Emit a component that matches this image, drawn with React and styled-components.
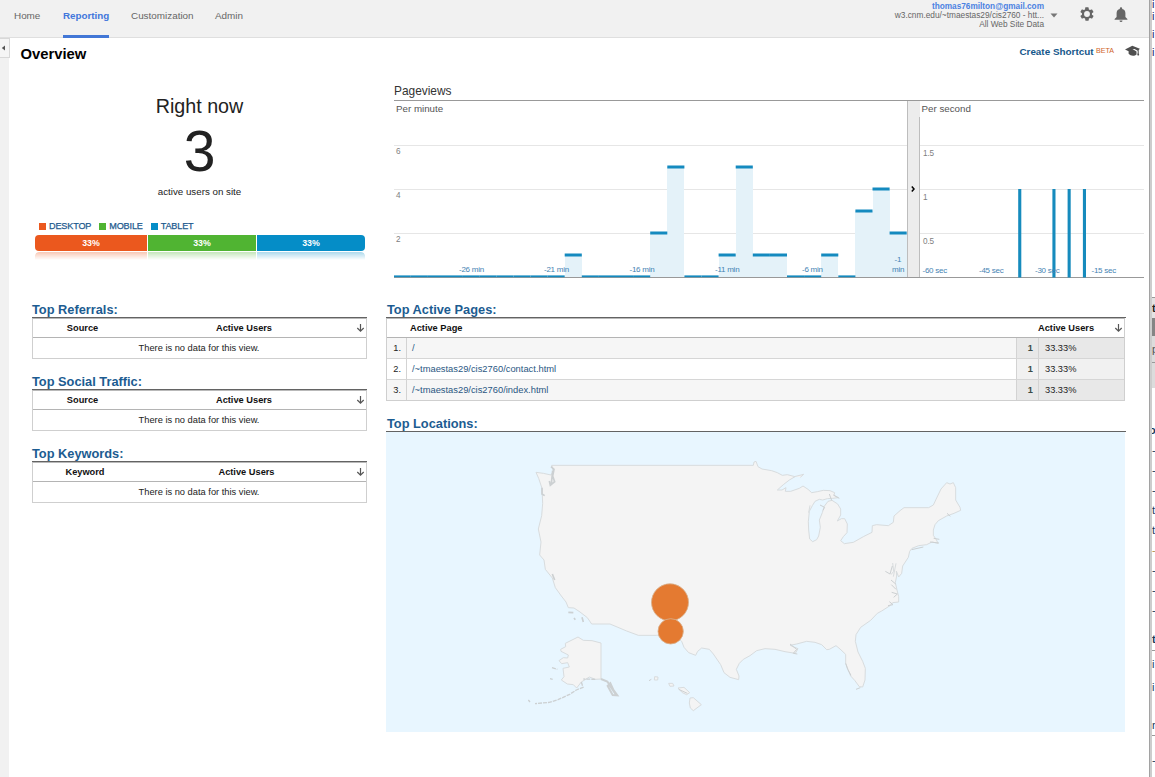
import React from 'react';
import styled, { createGlobalStyle } from 'styled-components';

const Global = createGlobalStyle`
  *, *::before, *::after { box-sizing: border-box; }
  body { margin: 0; background: #fff; font-family: "Liberation Sans", Arial, sans-serif; color: #222; overflow: hidden; }
`;

const Screen = styled.div`display: flex; width: 1155px; height: 777px; overflow: hidden;`;
const Window = styled.div`display: flex; flex-direction: column; width: 1149px; flex: none;`;
const WindowEdge = styled.div`width: 3px; flex: none; background: #cdcdcd; border-left: 1px solid #a2a2a2;`;

const Header = styled.header`
  display: flex; height: 38px; flex: none; padding-left: 14px;
  background: #f1f1f1; border-bottom: 1px solid #dfdfdf;
`;
const Nav = styled.nav`display: flex; gap: 22px; flex: 1;`;
const NavItem = styled.a`
  height: 38px; line-height: 32px; width: ${p => p.$w}px; font-size: ${p => (p.$active ? 9.8 : 9.9)}px; white-space: nowrap;
  color: ${p => (p.$active ? '#4277dc' : '#666')};
  font-weight: ${p => (p.$active ? 700 : 400)};
  border-bottom: ${p => (p.$active ? '3px solid #4277d6' : '0')};
`;
const Account = styled.div`
  padding-top: 2px; text-align: right; font-size: 8.3px; line-height: 9px; color: #666; white-space: nowrap;
`;
const Email = styled.div`font-weight: 700; color: #4b82e2; font-size: 8.25px;`;
const HeaderIcon = styled.svg`display: block; flex: none; margin: ${p => p.$m};`;

const Body = styled.div`display: flex; flex: 1; min-height: 0;`;
const Rail = styled.aside`width: 9px; flex: none; background: #f1f1f1;`;
const RailToggle = styled.div`
  display: flex; align-items: center; justify-content: center; width: 10px; height: 20px; padding-right: 3px;
  background: #f5f5f5; border: 1px solid #d8d8d8; border-left: 0;
`;
const Content = styled.main`flex: 1; min-width: 0;`;
const TitleBar = styled.div`display: flex; align-items: center; height: 32px; padding: 0 9px 0 11.5px;`;
const Title = styled.h1`margin: 0; flex: 1; font-size: 14.8px; line-height: 18px; color: #000;`;
const Shortcut = styled.a`font-size: 9.9px; font-weight: 700; color: #15578a; margin-top: -5px;`;
const Beta = styled.span`margin: -7px 11px 0 2.5px; font-size: 7.1px; color: #d0652a;`;

const Columns = styled.div`display: flex; align-items: flex-start; padding-left: 23px;`;
const LeftCol = styled.section`width: 335px; flex: none;`;
const RightCol = styled.section`margin-left: 19px; width: 758px; padding-top: 12px;`;

const Summary = styled.div`height: 230px; padding: 25px 2px 0 3px; text-align: center; color: #222;`;
const SummaryTitle = styled.div`font-size: 19.7px; line-height: 22px; padding-right: 1px;`;
const SummaryCount = styled.div`font-size: 57px; line-height: 62px; padding: 3px 1px 0 0; margin-bottom: 4px;`;
const SummaryNote = styled.div`font-size: 9.75px; line-height: 12px; padding-right: 1px;`;
const Legend = styled.div`display: flex; gap: 8px; margin: 22px 0 3px 4px; line-height: 12px;`;
const LegendItem = styled.span`
  display: flex; align-items: center; gap: 3px; font-size: 9.1px; letter-spacing: -0.15px; color: #1d5a8e;
  -webkit-text-stroke: .25px #1d5a8e;
  &::before { content: ''; width: 7px; height: 7px; margin-top: 1px; background: ${p => p.$c}; }
`;
const Split = styled.div`
  display: grid; grid-template-columns: 112px 108px 108px; gap: 1px; height: 16px; border-radius: 4px; overflow: hidden;
`;
const SplitPart = styled.div`
  background: ${p => p.$c}; color: #fff; font-size: 8.8px; font-weight: 700; line-height: 16px;
`;
const Reflection = styled(Split)`
  height: 8px; margin-top: 1px; opacity: .33; border-radius: 4px 4px 0 0;
  mask-image: linear-gradient(#000, transparent);
`;

const Block = styled.div`width: ${p => p.$w || 335}px; height: ${p => (p.$h ? p.$h + 'px' : 'auto')};`;
const BlockTitle = styled.h2`
  margin: 0; height: 17px; padding-left: ${p => p.$pl || 0}px; font-size: 12.8px; line-height: 19px; color: #1c5c91;
`;
const Rule = styled.div`height: 1px; background: #636363;`;
const Table = styled.div`width: ${p => p.$w || 335}px; border: 1px solid #cfcfcf; border-top-color: #b9b9b9; font-size: 9.25px;`;
const TableHead = styled.div`
  display: flex; align-items: center; height: 19px; padding-right: 1px; border-bottom: 1px solid #b4b4b4; font-weight: 700; color: #111;
`;
const HeadCell = styled.div`
  width: ${p => p.$w}px; flex: ${p => (p.$grow ? 1 : 'none')}; text-align: ${p => p.$align || 'center'}; padding-left: ${p => p.$pl || 0}px;
`;
const EmptyRow = styled.div`height: 20px; line-height: 20px; padding-right: 1px; text-align: center; color: #222; font-size: 9.3px;`;
const Row = styled.div`
  display: grid; grid-template-columns: 20px 610px 22px 1fr; height: 21px; line-height: 20px;
  background: ${p => (p.$odd ? '#f6f6f6' : '#fff')};
  &:last-child { height: 20px; }
`;
const Cell = styled.div`
  padding: ${p => p.$pad || '0 5px'}; text-align: ${p => p.$align || 'left'};
  font-weight: ${p => (p.$bold ? 700 : 400)}; color: ${p => p.$color || '#222'};
  background: ${p => p.$bg || 'transparent'};
  border-right: ${p => (p.$last ? 0 : '1px solid #d3d3d3')};
  border-bottom: 1px solid #d6d6d6;
  ${Row}:last-child & { border-bottom: 0; }
`;
const PageLink = styled.a`color: #2a5783; font-size: 9.35px;`;

const ChartPanel = styled.div`margin-left: 8px; width: 750px; height: 218px;`;
const ChartTitle = styled.div`height: 18px; font-size: 11.9px; line-height: 18px; color: #333;`;
const ChartSvg = styled.svg`display: block; font-family: "Liberation Sans", Arial, sans-serif;`;
const MapSvg = styled.svg`display: block; background: #e8f6ff;`;

const Behind = styled.aside`width: 3px; flex: none; overflow: hidden; background: #fff;`;
const Fragment = styled.div`
  height: ${p => p.$h}px; line-height: ${p => p.$h}px; overflow: hidden; white-space: nowrap; text-indent: ${p => p.$x || 0}px;
  font-size: 11px; font-weight: ${p => (p.$bold ? 700 : 400)};
  color: ${p => p.$color || '#173b5c'}; background: ${p => p.$bg || 'transparent'};
  border-bottom: ${p => (p.$line ? '1px solid #999' : '0')};
`;

const VALUES = [0,0,0,0,0,0,0,0,0,0,1,0,0,0,0,2,5,0,0,1,5,1,1,0,0,1,0,3,4,2];
const STEP = 17.1;
const START = 393.7;

function Pageviews() {
  return (
    <ChartSvg width="750" height="178" viewBox="394 100 750 178">
      <g shapeRendering="crispEdges">
        {[145, 189, 233].map(y => (
          <g key={y} fill="#e6e6e6"><rect x="394" y={y} width="513" height="1" /><rect x="920" y={y} width="224" height="1" /></g>
        ))}
        <rect x="907" y="100" width="13" height="178" fill="#ececec" />
        <rect x="907" y="100" width="1" height="178" fill="#bdbdbd" />
        <rect x="919" y="117" width="1" height="160" fill="#bdbdbd" />
        <rect x="394" y="100" width="750" height="1" fill="#999" />
      </g>
      {VALUES.map((v, i) => v > 0 && (
        <rect key={i} x={START + i * STEP} y={277 - v * 22} width={STEP} height={v * 22} fill="#e4f2f9" shapeRendering="crispEdges" />
      ))}
      <rect x="394" y="277" width="750" height="1" fill="#999" />
      {VALUES.map((v, i) => (
        <rect key={i} x={START + i * STEP} y={v ? 276 - v * 22 - 0.5 : 275.4} width={STEP} height={v ? 3 : 1.8} fill="#148abf" />
      ))}
      <g fill="#168bbd">
        {[1018.2, 1052.4, 1067.6, 1082.9].map(x => <rect key={x} x={x} y="189" width="3.1" height="88.5" />)}
      </g>
      <g fontSize="9.75" fill="#555"><text x="396" y="112">Per minute</text><text x="921.5" y="112">Per second</text></g>
      <g fontSize="8.2" fill="#808080" letterSpacing="-0.15">
        <text x="396" y="154">6</text><text x="396" y="198">4</text><text x="396" y="242">2</text>
        <text x="923" y="156">1.5</text><text x="923" y="200">1</text><text x="923" y="244">0.5</text>
      </g>
      <g fontSize="8" fill="#4583b3" letterSpacing="-0.25">
        <text x="459" y="272">-26 min</text><text x="544" y="272">-21 min</text><text x="629.5" y="272">-16 min</text>
        <text x="715" y="272">-11 min</text><text x="802" y="272">-6 min</text>
        <text x="894.5" y="262">-1</text><text x="892" y="272">min</text>
        <text x="922.5" y="273">-60 sec</text><text x="979" y="273">-45 sec</text><text x="1035" y="273">-30 sec</text><text x="1091.5" y="273">-15 sec</text>
      </g>
      <path d="M911.8 186.5l2.2 2.5l-2.2 2.5" fill="none" stroke="#000" strokeWidth="1.5" />
    </ChartSvg>
  );
}

function LocationsMap() {
  return (
    <MapSvg width="739" height="300" viewBox="-342 -24 2217 900">
      <g fill="#f4f4f4" stroke="#d8dcde" strokeWidth="3" strokeLinejoin="round">
        <path d="M155 76H760L762 66L768 64L774 80L786 87L815 92L832 98L847 106L862 104L885 110L868 120L850 134L832 150L846 150L858 143L856 154L872 154L898 145L909 138L924 148L935 158L952 155L970 151L990 152L1004 158L1002 166L1015 173L998 175L982 176L968 180L958 178L945 184L937 197L928 214L925 245L926 270L929 297L938 305L950 299L956 288L961 262L958 240L967 218L972 200L984 184L996 181L1013 192L1022 207L1022 225L1012 243L1024 236L1034 236L1042 252L1041 278L1030 290L1022 302L1033 311L1060 307L1090 290L1116 277L1117 257L1130 254L1165 257L1180 247L1182 228L1200 212L1212 203H1286L1300 195L1310 174L1323 147L1340 128L1350 132L1360 128L1367 143V180L1380 202L1382 211L1362 220L1340 228L1315 242L1305 254L1300 270V286L1309 299L1314 310L1296 306L1280 314L1256 317L1236 325L1229 334L1225 352L1208 378L1205 400L1196 411L1189 393L1190 408L1186 428L1191 450L1196 470V486L1178 488L1170 497L1145 513L1132 520L1112 541L1082 562L1068 584L1066 604L1074 636L1088 664L1096 685L1095 720L1088 741L1078 740L1064 721L1052 708L1044 688L1037 670V643L1020 627L1008 617L988 628L980 629L965 614L945 607L920 604L890 612L870 616L894 626L886 640L855 635L825 628L795 626L770 632L750 647L730 658L718 670L709 688L717 708L716 719L690 712L672 698L662 674L640 642L628 628L605 624L593 634L587 646L566 638L552 622L545 604L530 590L512 579L470 586H415L380 573L330 552H275L262 533L240 516L222 504L205 503L198 486L184 468L166 443L157 414L136 388L132 360L119 345L123 306L115 267L125 227L128 190L126 145L116 115L108 97L130 100L153 105L160 94Z" />
        <path d="M303 609V717L286 718L268 711L244 726L230 744L220 734L202 732L184 720L192 710L189 685L208 681L203 668L185 671L177 662L190 653L203 654L205 645L183 634L182 628L197 620L196 610L222 597L234 591L250 601L276 602Z" />
        <path d="M570 774L580 773L604 794L588 806L580 812L571 804L568 789ZM534 744L552 742L569 758L560 764L547 758ZM506 730L518 730L522 738L510 739ZM464 710L474 711L473 720L463 720Z" />
        <path d="M883 110L911 103L901 112M926 218L930 196M1178 369L1181 394L1173 404M1188 370L1180 410" />
      </g>
      <g fill="none" stroke="#ccd0d2" strokeWidth="5">
        <path d="M153 80L162 88L158 108L164 125L151 136L148 123M158 92L154 132M126 143V162L134 167M157 402L164 420M205 517L220 518M222 534L226 539M246 532L250 546" />
        <path d="M303 717L322 725L352 766L338 765L323 738L331 730L344 758M326 732L348 764" strokeWidth="6" />
        <path d="M244 726L249 742L229 750L209 763L174 779L148 787L105 791M90 786L85 780M286 718L250 717M156 683L172 688M150 716L158 718" strokeWidth="4" strokeDasharray="12 3" />
        <path d="M447 722L454 718M536 748L562 760M1156 394L1170 402L1177 378M1173 420L1187 432M1174 434L1188 448M1175 457L1192 462L1181 472M1168 485L1179 494L1164 497M1290 306L1317 309M1301 295L1318 298M1341 220L1351 229M1235 329L1270 321M1037 670L1043 688L1053 706M870 612L890 628L880 640L892 642M1068 748L1081 743M960 195L974 202L969 211M988 162L995 181M1000 165L1018 175" strokeWidth="3" />
      </g>
      <g fill="#e47a31" stroke="#d9b08c" strokeWidth="2.5">
        <circle cx="510" cy="487" r="55.5" /><circle cx="512" cy="574" r="38" />
      </g>
    </MapSvg>
  );
}

const ArrowIcon = styled.svg`display: block; flex: none;`;
const SortArrow = () => (
  <ArrowIcon width="9" height="10" viewBox="0 0 9 10">
    <path d="M4.5 1v7M1.3 5L4.5 8.2L7.7 5" fill="none" stroke="#555" strokeWidth="1.2" />
  </ArrowIcon>
);

function EmptyTable({ title, label, labelWidth, usersWidth }) {
  return (
    <Block $h={72}>
      <BlockTitle>{title}</BlockTitle>
      <Rule />
      <Table>
        <TableHead>
          <HeadCell $w={labelWidth}>{label}</HeadCell>
          <HeadCell $w={usersWidth}>Active Users</HeadCell>
          <HeadCell $grow />
          <SortArrow />
        </TableHead>
        <EmptyRow>There is no data for this view.</EmptyRow>
      </Table>
    </Block>
  );
}

const PAGES = ['/', '/~tmaestas29/cis2760/contact.html', '/~tmaestas29/cis2760/index.html'];
const DEVICES = [['DESKTOP', '#eb581e'], ['MOBILE', '#50b432'], ['TABLET', '#058dc7']];
const FRAGMENTS = [
  { h: 8, t: 'i', color: '#22226a' }, { h: 17, t: 'i', color: '#22226a' }, { h: 18, t: 'i', color: '#22226a' },
  { h: 18, t: 'i', color: '#22226a' }, { h: 237, line: 1 },
  { h: 20, t: 't', bold: 1, bg: '#e3e3e3', color: '#222' }, { h: 18, bg: '#858585' },
  { h: 27, t: 'p', bg: '#dcdcdc', color: '#555', line: 1 }, { h: 25, bg: '#dcdcdc' }, { h: 32 },
  { h: 20, t: 'o', bold: 1, x: -3 }, { h: 20, t: '-' }, { h: 20, t: '-' }, { h: 20, t: '-' }, { h: 20, t: 't' }, { h: 20, t: 't' },
  { h: 20, t: '-', color: '#b09050' }, { h: 20, t: '-' }, { h: 20, t: '-' }, { h: 20, t: '-' }, { h: 8 },
  { h: 23, t: 't', bold: 1, line: 1 }, { h: 26, t: 'i' }, { h: 20, t: 'i' }, { h: 18 }, { h: 21, t: 'r', line: 1 }, { h: 14 }, { h: 20, t: '-' },
];

export default function App() {
  return (
    <Screen>
      <Global />
      <Window>
        <Header>
          <Nav>
            <NavItem $w={27}>Home</NavItem>
            <NavItem $w={46} $active>Reporting</NavItem>
            <NavItem $w={62}>Customization</NavItem>
            <NavItem $w={30}>Admin</NavItem>
          </Nav>
          <Account>
            <Email>thomas76milton@gmail.com</Email>
            <div>w3.cnm.edu/~tmaestas29/cis2760 - htt...</div>
            <div>All Web Site Data</div>
          </Account>
          <HeaderIcon $m="13px 21px 0 6px" width="8" height="5" viewBox="0 0 8 5"><path d="M.5.5h7L4 4.5z" fill="#777" /></HeaderIcon>
          <HeaderIcon $m="6px 19px 0 0" width="16" height="16" viewBox="0 0 24 24">
            <path fillRule="evenodd" fill="#666" d="M19.4 13a7.8 7.8 0 0 0 0-2l2.1-1.6a.5.5 0 0 0 .1-.7l-2-3.4a.5.5 0 0 0-.6-.2l-2.5 1a7.3 7.3 0 0 0-1.7-1l-.4-2.6a.5.5 0 0 0-.5-.5h-4a.5.5 0 0 0-.5.4l-.4 2.7a7.6 7.6 0 0 0-1.7 1l-2.5-1a.5.5 0 0 0-.6.2l-2 3.4a.5.5 0 0 0 .2.7L4.5 11a7.9 7.9 0 0 0 0 2l-2.1 1.6a.5.5 0 0 0-.2.7l2 3.4c.2.3.5.3.7.2l2.5-1a7.3 7.3 0 0 0 1.7 1l.4 2.6c0 .3.2.5.5.5h4c.3 0 .5-.2.5-.5l.4-2.6a7.6 7.6 0 0 0 1.7-1l2.5 1c.2.1.5 0 .6-.2l2-3.4a.5.5 0 0 0-.1-.7zM12 16.4a4.4 4.4 0 1 1 0-8.8 4.4 4.4 0 0 1 0 8.8z" />
          </HeaderIcon>
          <HeaderIcon $m="7px 21px 0 0" width="14" height="16" viewBox="0 0 14 16">
            <path d="M7 .3a1.2 1.2 0 0 1 1.2 1.2v.6A4.3 4.3 0 0 1 11.4 6v4l2 2v.8H.6V12l2-2V6a4.3 4.3 0 0 1 3.2-3.9v-.6A1.2 1.2 0 0 1 7 .3zM5.5 13.4h3a1.5 1.5 0 0 1-3 0z" fill="#666" />
          </HeaderIcon>
        </Header>
        <Body>
          <Rail>
            <RailToggle><svg width="4" height="6" viewBox="0 0 4 6"><path d="M4 .5v5L.8 3z" fill="#555" /></svg></RailToggle>
          </Rail>
          <Content>
            <TitleBar>
              <Title>Overview</Title>
              <Shortcut>Create Shortcut</Shortcut>
              <Beta>BETA</Beta>
              <HeaderIcon $m="-6px 0 0 0" width="15" height="12" viewBox="0 0 15 12">
                <path d="M0 4.4L7.3.7l7.6 3L13.7 5v3.2l.5 1.6-1.2 1.2-.8-1.7.5-1.2V5.7L9.5 4.1l-2-.2 4 2.6v2.9c-2 2-6 1.7-7.9-.6V6.2z" fill="#505050" />
              </HeaderIcon>
            </TitleBar>
            <Columns>
              <LeftCol>
                <Summary>
                  <SummaryTitle>Right now</SummaryTitle>
                  <SummaryCount>3</SummaryCount>
                  <SummaryNote>active users on site</SummaryNote>
                  <Legend>{DEVICES.map(([n, c]) => <LegendItem key={n} $c={c}>{n}</LegendItem>)}</Legend>
                  <Split>{DEVICES.map(([n, c]) => <SplitPart key={n} $c={c}>33%</SplitPart>)}</Split>
                  <Reflection>{DEVICES.map(([n, c]) => <SplitPart key={n} $c={c} />)}</Reflection>
                </Summary>
                <EmptyTable title="Top Referrals:" label="Source" labelWidth={99} usersWidth={224} />
                <EmptyTable title="Top Social Traffic:" label="Source" labelWidth={99} usersWidth={224} />
                <EmptyTable title="Top Keywords:" label="Keyword" labelWidth={104} usersWidth={219} />
              </LeftCol>
              <RightCol>
                <ChartPanel>
                  <ChartTitle>Pageviews</ChartTitle>
                  <Pageviews />
                </ChartPanel>
                <Block $w={740} $h={114}>
                  <BlockTitle $pl={1}>Top Active Pages:</BlockTitle>
                  <Rule />
                  <Table $w={739}>
                    <TableHead>
                      <HeadCell $grow $align="left" $pl={23}>Active Page</HeadCell>
                      <HeadCell $w={76} $align="left">Active Users</HeadCell>
                      <SortArrow />
                    </TableHead>
                    {PAGES.map((page, i) => (
                      <Row key={page} $odd={i % 2 === 0}>
                        <Cell $align="right">{i + 1}.</Cell>
                        <Cell><PageLink>{page}</PageLink></Cell>
                        <Cell $bold $align="right" $bg={i % 2 ? '#f1f1f1' : '#e8e8e8'} $color="#3c4a46">1</Cell>
                        <Cell $last $pad="0 6px" $bg={i % 2 ? '#f1f1f1' : '#e8e8e8'}>33.33%</Cell>
                      </Row>
                    ))}
                  </Table>
                </Block>
                <Block $w={740}>
                  <BlockTitle $pl={1}>Top Locations:</BlockTitle>
                  <Rule />
                  <LocationsMap />
                </Block>
              </RightCol>
            </Columns>
          </Content>
        </Body>
      </Window>
      <WindowEdge />
      <Behind>
        {FRAGMENTS.map((f, i) => (
          <Fragment key={i} $h={f.h} $x={f.x} $bold={f.bold} $color={f.color} $bg={f.bg} $line={f.line}>{f.t}</Fragment>
        ))}
      </Behind>
    </Screen>
  );
}
